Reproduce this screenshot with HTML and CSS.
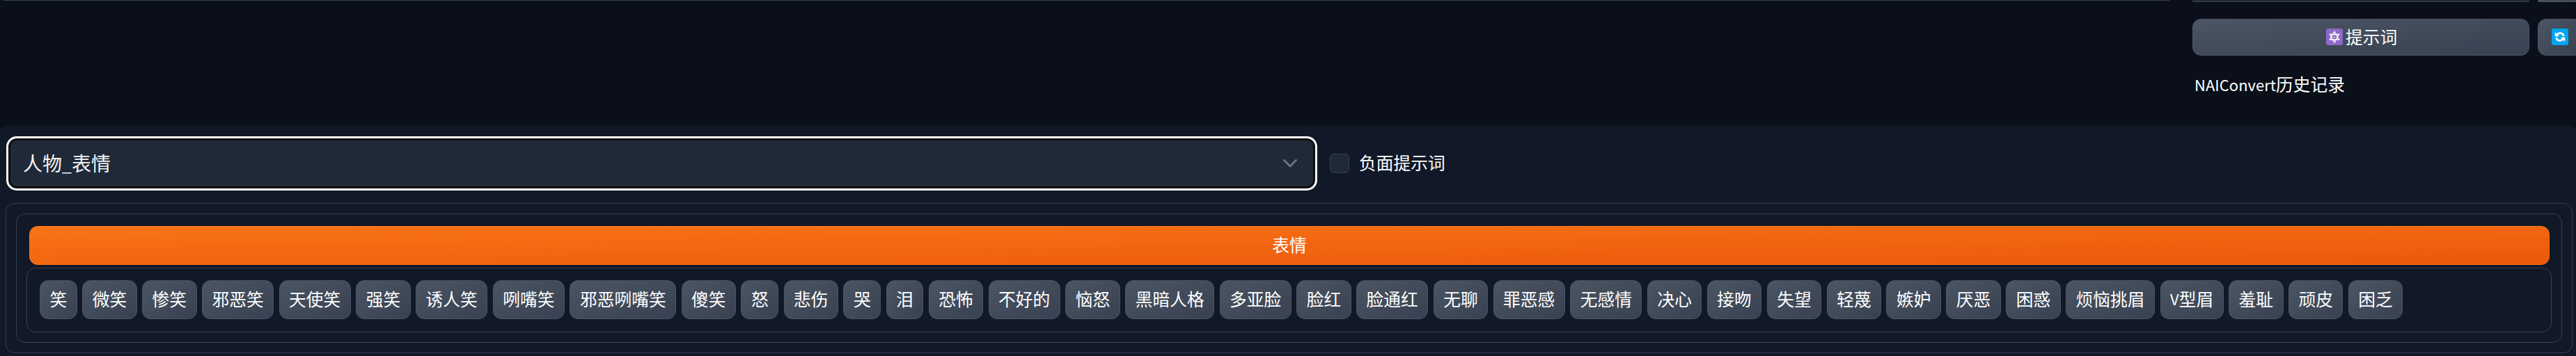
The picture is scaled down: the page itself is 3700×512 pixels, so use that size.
FILE: index.html
```html
<!DOCTYPE html>
<html lang="zh-CN">
  <head>
    <title>NAIConvert</title>
    <meta charset="UTF-8" />
    <link rel="stylesheet" href="styles.css">
  </head>

  <body>
    <div class="app">
      <div class="top_area">
        <div class="prompt_box"></div>
        <div class="side">
          <div class="side_row">
            <div class="side_select"></div>
            <button class="btn side_btn cut"></button>
          </div>
          <div class="side_row tools">
            <button class="btn prompt_btn">
              <svg class="emoji" viewBox="0 0 24 24">
                <rect width="24" height="24" rx="3" fill="#8e68c8" />
                <path d="M12 4.5 18.6 16H5.400ZM12 20 5.400 8.500H18.600Z" fill="none" stroke="#fff" stroke-width="1.4" />
                <circle cx="12" cy="12.200" r="0.9" fill="#fff" />
              </svg>
              <span class="prompt_text">提示词</span>
            </button>
            <button class="btn side_btn">
              <svg class="emoji" viewBox="0 0 24 24">
                <rect width="24" height="24" rx="3" fill="#00a4ef" />
                <path d="M8 8.500C11 5.500 16.500 6 17.300 11M16 15.500C13 18.500 7.500 18 6.700 13" fill="none" stroke="#fff" stroke-width="2.8" />
                <path d="M4.800 5v6.300h6.300ZM19.200 19v-6.300h-6.300Z" fill="#fff" />
              </svg>
            </button>
          </div>
          <div class="history"><span class="latin">NAIConvert</span>历史记录</div>
        </div>
      </div>

      <div class="panel">
        <div class="filter_row">
          <div class="select">
            <span class="select_text">人物<span class="latin">_</span>表情</span>
            <svg class="arrow" viewBox="0 0 20 12">
              <path d="M1.500 1.500 10 10 18.500 1.500" />
            </svg>
          </div>
          <label class="negative">
            <span class="checkbox"></span>
            <span class="negative_text">负面提示词</span>
          </label>
        </div>

        <div class="group outer">
          <div class="group inner">
            <button class="btn primary">表情</button>
            <div class="group tags">
              <button class="btn tag">笑</button>
              <button class="btn tag">微笑</button>
              <button class="btn tag">惨笑</button>
              <button class="btn tag">邪恶笑</button>
              <button class="btn tag">天使笑</button>
              <button class="btn tag">强笑</button>
              <button class="btn tag">诱人笑</button>
              <button class="btn tag">咧嘴笑</button>
              <button class="btn tag">邪恶咧嘴笑</button>
              <button class="btn tag">傻笑</button>
              <button class="btn tag">怒</button>
              <button class="btn tag">悲伤</button>
              <button class="btn tag">哭</button>
              <button class="btn tag">泪</button>
              <button class="btn tag">恐怖</button>
              <button class="btn tag">不好的</button>
              <button class="btn tag">恼怒</button>
              <button class="btn tag">黑暗人格</button>
              <button class="btn tag">多亚脸</button>
              <button class="btn tag">脸红</button>
              <button class="btn tag">脸通红</button>
              <button class="btn tag">无聊</button>
              <button class="btn tag">罪恶感</button>
              <button class="btn tag">无感情</button>
              <button class="btn tag">决心</button>
              <button class="btn tag">接吻</button>
              <button class="btn tag">失望</button>
              <button class="btn tag">轻蔑</button>
              <button class="btn tag">嫉妒</button>
              <button class="btn tag">厌恶</button>
              <button class="btn tag">困惑</button>
              <button class="btn tag">烦恼挑眉</button>
              <button class="btn tag"><span class="latin">V</span>型眉</button>
              <button class="btn tag">羞耻</button>
              <button class="btn tag">顽皮</button>
              <button class="btn tag">困乏</button>
            </div>
          </div>
        </div>
      </div>
    </div>
  </body>
</html>
```

FILE: styles.css
```css
* {
  box-sizing: border-box;
}

body {
  margin: 0;
  background: #0b0f19;
  color: #fff;
  font-family: "Noto Sans CJK SC", sans-serif;
  font-size: 24.75px;
}

.app {
  height: 512px;
  overflow: hidden;
}

.top_area {
  display: flex;
  justify-content: space-between;
  height: 181px;
}

.prompt_box {
  width: 3111px;
  height: 1px;
  margin-left: 5px;
  background: #374151;
}

.side {
  width: 551px;
}

.side_row {
  display: flex;
  gap: 12px;
}

.side_select {
  flex: none;
  width: 484px;
  height: 3px;
  border: 1px solid #374151;
  border-top: none;
  border-radius: 0 0 10px 10px;
  background: #1f2937;
}

.btn {
  display: flex;
  align-items: center;
  justify-content: center;
  padding: 0 0 4px;
  border: 1px solid #4b5563;
  border-radius: 12px;
  background: linear-gradient(to bottom right, #4b5563, #374151);
  color: #fff;
  font-family: inherit;
  font-size: inherit;
  line-height: 36px;
  white-space: nowrap;
}

.side_btn {
  flex: none;
  width: 64px;
  padding-bottom: 2px;
}

.cut {
  height: 3px;
  padding: 0;
  border-top: none;
  border-radius: 0 0 10px 10px;
}

.tools {
  margin-top: 24px;
  height: 53px;
}

.latin {
  font-size: 0.89em;
}

.prompt_btn {
  flex: none;
  width: 484px;
  gap: 4px;
  padding: 0 0 2px 2px;
}

.prompt_text {
  padding-bottom: 2px;
}

.emoji {
  width: 24px;
  height: 24px;
}

.history {
  padding: 22px 0 0 3px;
  line-height: 36px;
}

.panel {
  height: 331px;
  padding: 15px 5px 0 8px;
  border-radius: 8px 8px 0 0;
  background: #111827;
}

.filter_row {
  display: flex;
  align-items: center;
  height: 78px;
  padding-left: 1px;
}

.select {
  display: flex;
  align-items: center;
  justify-content: space-between;
  width: 1883px;
  height: 78px;
  padding: 0 26px 0 21px;
  border: 3px solid #fff;
  border-radius: 15px;
  background: #1f2937;
  box-shadow: inset 0 0 0 3px #101010;
  color: #f3f4f6;
  font-size: 28px;
}

.select_text {
  padding-bottom: 2px;
}

.arrow {
  width: 20px;
  height: 12px;
  fill: none;
  stroke: #6b7280;
  stroke-width: 3;
  stroke-linecap: round;
  stroke-linejoin: round;
}

.negative {
  display: flex;
  align-items: center;
  gap: 14px;
  margin-left: 18px;
}

.negative_text {
  padding-bottom: 5px;
}

.checkbox {
  width: 28px;
  height: 28px;
  border: 1px solid #374151;
  border-radius: 6px;
  background: #1f2937;
}

.group {
  border: 1px solid #374151;
  border-radius: 13px;
}

.outer {
  height: 216px;
  margin-top: 18px;
  padding: 14px;
}

.inner {
  height: 186px;
  padding: 17px 14px 0;
}

.primary {
  width: 3620px;
  height: 56px;
  margin-left: 4px;
  border-color: #f97316;
  background: linear-gradient(to bottom right, #f97316, #ea580c);
}

.tags {
  display: flex;
  gap: 7.4px;
  height: 93px;
  margin-top: 4px;
  padding: 17px 18px;
}

.tag {
  height: 56px;
  padding: 0 13.5px 4px;
}
```
